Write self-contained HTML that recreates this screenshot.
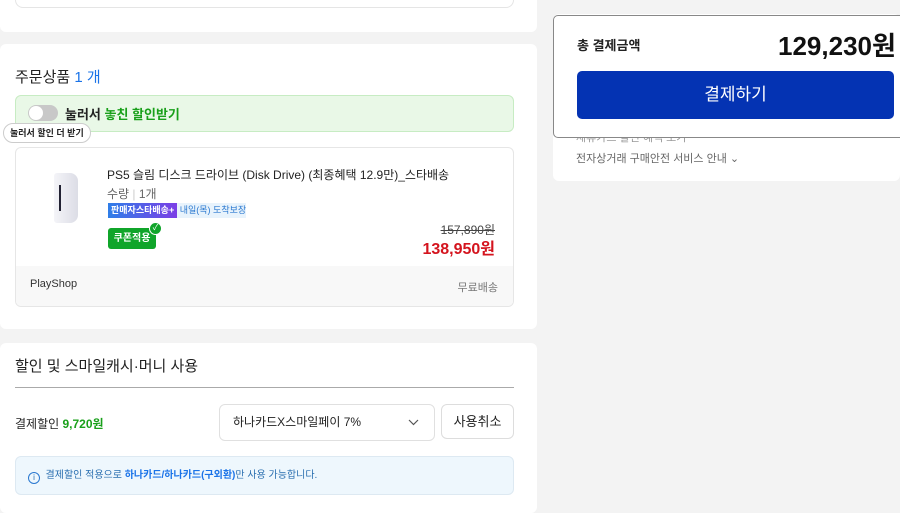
<!DOCTYPE html>
<html><head><meta charset="utf-8"><style>
*{box-sizing:border-box;margin:0;padding:0}
body{width:900px;height:502px;overflow:hidden;background:#f3f3f3;font-family:"Liberation Sans","Noto Sans CJK KR",sans-serif;color:#222;position:relative}
.card{position:absolute;background:#fff;border-radius:6px}
.abs{position:absolute;white-space:nowrap}
</style></head><body>
<div class="card" style="left:0;top:-10px;width:537px;height:42px"></div>
<div class="abs" style="left:15px;top:-10px;width:499px;height:18px;border:1px solid #e5e5e5;border-top:none;border-radius:0 0 8px 8px;background:#fff"></div>

<div class="card" style="left:0;top:44px;width:537px;height:285px">
 <div class="abs" style="left:15px;top:22px;font-size:15px">주문상품 <span style="color:#1a73e8">1 개</span></div>
 <div class="abs" style="left:15px;top:51px;width:499px;height:37px;background:#e9f8e7;border:1px solid #c7ecc3;border-radius:6px">
  <div class="abs" style="left:12px;top:9px;width:30px;height:16px;border-radius:8px;background:#c8c8c8"><div style="position:absolute;left:1px;top:1px;width:14px;height:14px;border-radius:50%;background:#fff"></div></div>
  <div class="abs" style="left:49px;top:8px;font-size:13px;font-weight:bold">눌러서 <span style="color:#19a01a">놓친 할인받기</span></div>
 </div>
 <div class="abs" style="left:3px;top:79px;height:20px;padding:0 6px;border:1px solid #ccc;border-radius:10px;background:#fff;font-size:9px;font-weight:bold;line-height:18px">눌러서 할인 더 받기</div>
 <div class="abs" style="left:15px;top:103px;width:499px;height:160px;border:1px solid #e6e6e6;border-radius:6px;overflow:hidden">
  <div class="abs" style="left:38px;top:25px;width:24px;height:50px;background:linear-gradient(90deg,#f4f4f8,#dcdde6);border-radius:3px 8px 8px 3px"><div style="position:absolute;left:5px;top:12px;width:2px;height:26px;background:#223"></div></div>
  <div class="abs" style="left:91px;top:18px;font-size:12px">PS5 슬림 디스크 드라이브 (Disk Drive) (최종혜택 12.9만)_스타배송</div>
  <div class="abs" style="left:91px;top:37px;font-size:12px;color:#666">수량 <span style="color:#ccc">|</span> 1개</div>
  <div class="abs" style="left:92px;top:55px;height:15px;font-size:9px;line-height:15px;background:#e8f3fc;color:#2a78d0"><span style="background:linear-gradient(90deg,#2f7ee8,#7b3ee6);color:#fff;padding:0 3px;font-weight:bold;display:inline-block">판매자스타배송+</span> 내일(목) 도착보장</div>
  <div class="abs" style="left:92px;top:80px;width:48px;height:21px;background:#10a52a;border-radius:3px;color:#fff;font-size:10px;font-weight:bold;line-height:21px;text-align:center">쿠폰적용</div>
  <div class="abs" style="left:133px;top:74px;width:13px;height:13px;border-radius:50%;background:#10a52a;border:1.5px solid #fff;color:#fff;font-size:8px;line-height:10px;text-align:center">✓</div>
  <div class="abs" style="right:18px;top:73px;font-size:12px;color:#444;text-decoration:line-through">157,890<span style="text-decoration:none">원</span></div>
  <div class="abs" style="right:18px;top:87px;font-size:16px;font-weight:bold;color:#d4141e">138,950원</div>
  <div class="abs" style="left:0;top:118px;width:499px;height:42px;background:#f8f8f8"></div>
  <div class="abs" style="left:14px;top:130px;font-size:11px;color:#333">PlayShop</div>
  <div class="abs" style="right:15px;top:131px;font-size:11px;color:#777">무료배송</div>
 </div>
</div>

<div class="card" style="left:0;top:343px;width:537px;height:170px">
 <div class="abs" style="left:15px;top:12px;font-size:15px">할인 및 스마일캐시·머니 사용</div>
 <div class="abs" style="left:15px;top:44px;width:499px;height:1px;background:#aaa"></div>
 <div class="abs" style="left:15px;top:72px;font-size:12px">결제할인 <b style="color:#19a01a">9,720원</b></div>
 <div class="abs" style="left:219px;top:61px;width:216px;height:37px;border:1px solid #e0e0e0;border-radius:6px;font-size:12px;line-height:35px;padding-left:13px">하나카드X스마일페이 7%<svg style="position:absolute;right:15px;top:14px" width="11" height="7" viewBox="0 0 11 7"><path d="M1 1l4.5 4.5L10 1" fill="none" stroke="#555" stroke-width="1.2"/></svg></div>
 <div class="abs" style="left:441px;top:61px;width:73px;height:35px;border:1px solid #ddd;border-radius:6px;font-size:13px;line-height:33px;text-align:center">사용취소</div>
 <div class="abs" style="left:15px;top:113px;width:499px;height:39px;background:#eef7fd;border:1px solid #dde9f2;border-radius:6px;font-size:10px;line-height:37px;padding-left:12px;color:#2a6fb0"><span style="display:inline-block;width:12px;height:12px;border:1px solid #2a78d0;border-radius:50%;font-size:8px;line-height:10px;text-align:center;vertical-align:-2px">i</span>&nbsp; 결제할인 적용으로 <b style="color:#1a73e8">하나카드/하나카드(구외환)</b>만 사용 가능합니다.</div>
</div>

<div class="card" style="left:553px;top:14px;width:347px;height:167px">
 <div class="abs" style="left:23px;top:115px;font-size:11px;color:#999">제휴카드 할인 혜택 보기</div>
 <div class="abs" style="left:23px;top:136px;font-size:11px;color:#666">전자상거래 구매안전 서비스 안내 ⌄</div>
</div>
<div class="abs" style="left:553px;top:15px;width:352px;height:123px;background:#fff;border:1px solid #888;border-radius:5px">
 <div class="abs" style="left:23px;top:19px;font-size:13px;font-weight:bold">총 결제금액</div>
 <div class="abs" style="left:224px;top:10px;font-size:26px;font-weight:bold;color:#111;letter-spacing:0">129,230원</div>
 <div class="abs" style="left:23px;top:55px;width:317px;height:48px;background:#0433b3;border-radius:5px;color:#fff;font-size:17px;line-height:48px;text-align:center">결제하기</div>
</div>
</body></html>
